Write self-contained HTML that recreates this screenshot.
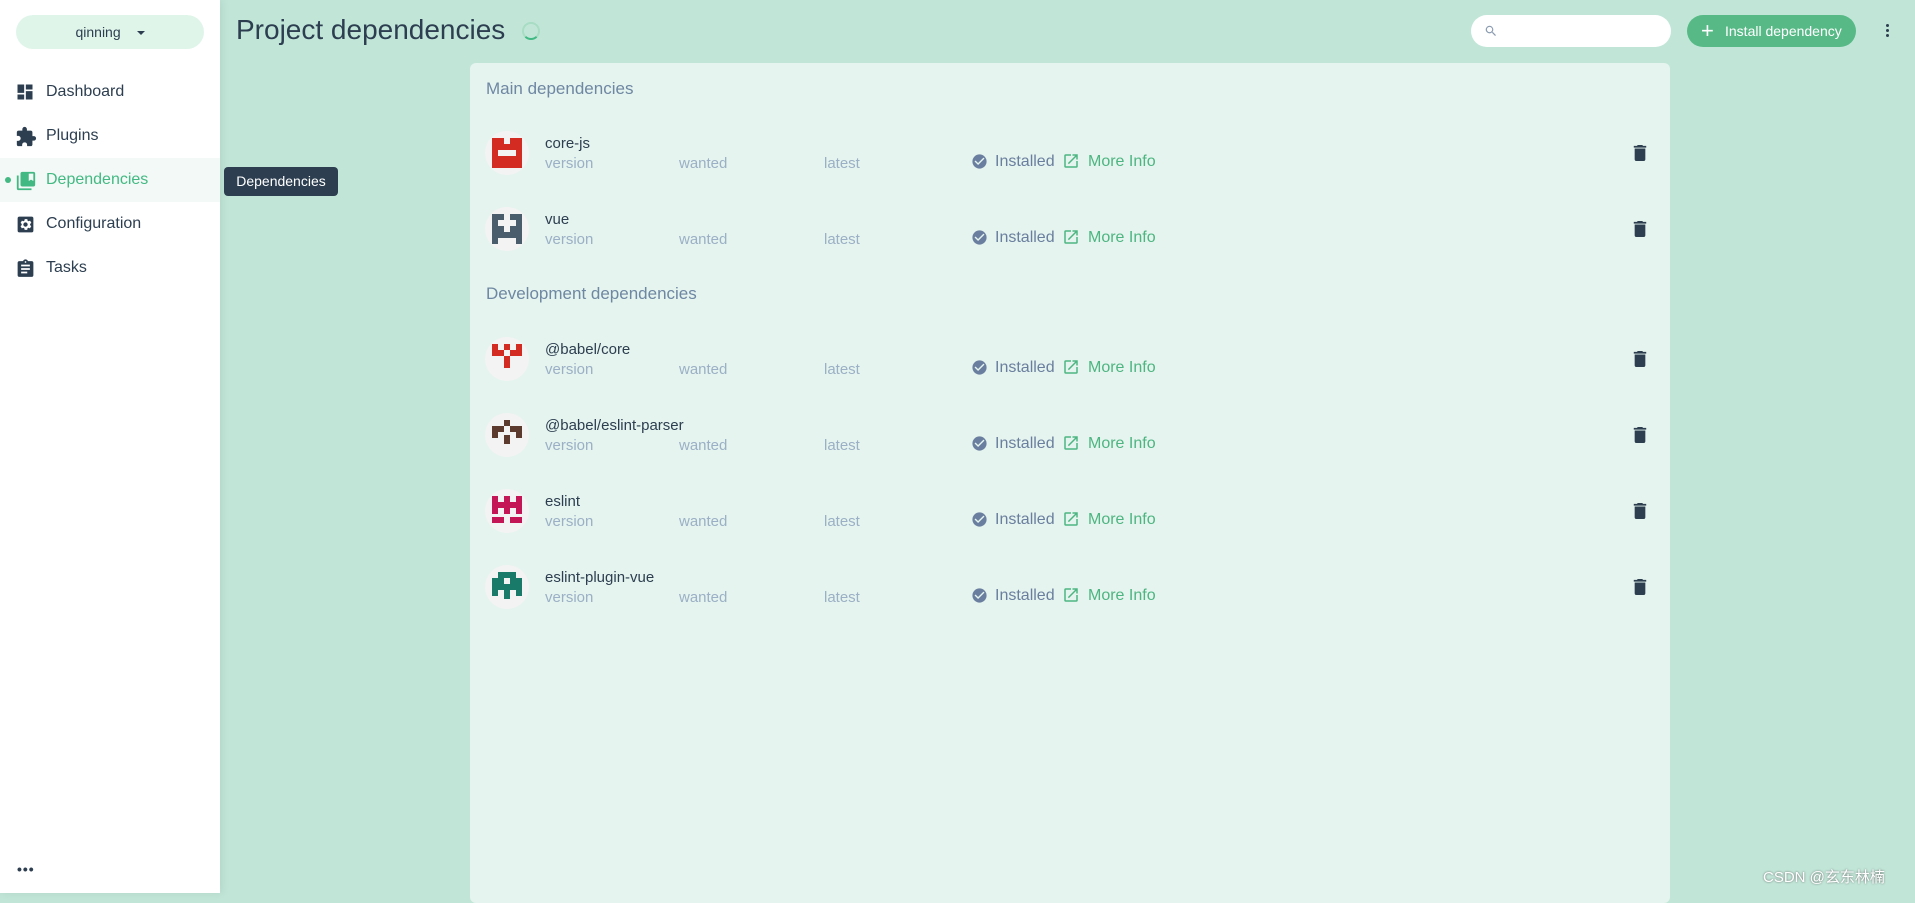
<!DOCTYPE html>
<html><head><meta charset="utf-8"><style>
*{margin:0;padding:0;box-sizing:border-box}
body{width:1915px;height:893px;overflow:hidden;background:#c1e6d8;font-family:"Liberation Sans",sans-serif;position:relative;color:#2c3e50}
.side{position:absolute;left:0;top:0;width:220px;height:893px;background:#fff;box-shadow:2px 0 8px rgba(0,0,0,.08)}
.pill{position:absolute;left:16px;top:15px;width:188px;height:34px;border-radius:17px;background:#e0f5ea;font-size:14px;text-align:center;line-height:34px;color:#2c3e50}
.nav{position:absolute;left:0;width:220px;height:44px;font-size:16px;line-height:44px;color:#2c3e50}
.nav svg{position:absolute;left:15px;top:12px}
.nav span{position:absolute;left:46px}
.nav.act{background:#f3f9f6;color:#42b983}
.dot{position:absolute;left:5px;top:19px;width:6px;height:6px;border-radius:3px;background:#42b983}
.tip{position:absolute;left:224px;top:167px;width:114px;height:29px;background:#2c3e50;border-radius:4px;color:#fff;font-size:14px;line-height:29px;text-align:center}
h1{position:absolute;left:236px;top:14px;font-size:28px;font-weight:normal;color:#2c3e50}
.spin{position:absolute;left:522px;top:22px;width:18px;height:18px;border-radius:50%;border:2px solid #a8dcc3;border-bottom-color:#42b983}
.search{position:absolute;left:1471px;top:15px;width:200px;height:32px;border-radius:16px;background:#fff}
.btn{position:absolute;left:1687px;top:15px;width:169px;height:32px;border-radius:16px;background:#57ba86;color:#fff;font-size:14px;line-height:32px}
.card{position:absolute;left:470px;top:63px;width:1200px;height:840px;background:#e5f4ee;border-radius:6px}
.sec{position:absolute;left:16px;font-size:17px;color:#6e87a3}
.row{position:absolute;left:0;width:1200px;height:60px}
.av{position:absolute;left:15px;top:-12px;width:44px;height:44px;border-radius:50%;background:#f3f3f3}
.av svg{position:absolute;left:7px;top:7px}
.nm{position:absolute;left:75px;top:-8px;font-size:15px;color:#2c3e50}
.g{position:absolute;top:12px;font-size:15px;color:#9bb0c6}
.ins{position:absolute;left:525px;top:10px;font-size:16px;color:#6a7f9f}
.mi{position:absolute;left:618px;top:10px;font-size:16px;color:#4db581}
.tr{position:absolute;left:1163px;top:2px}
</style></head><body>
<div class="side">
<div class="pill">qinning <span style="display:inline-block;margin-left:12px;border-left:4px solid transparent;border-right:4px solid transparent;border-top:4px solid #2c3e50;vertical-align:middle"></span></div>
<div class="nav" style="top:70px"><svg width="20" height="20" viewBox="0 0 24 24"><path fill="#2c3e50" d="M3 13h8V3H3zm0 8h8v-6H3zm10 0h8V11h-8zm0-18v6h8V3z"/></svg><span>Dashboard</span></div>
<div class="nav" style="top:114px"><svg width="22" height="22" viewBox="0 0 24 24"><path fill="#2c3e50" d="M20.5 11H19V7a2 2 0 0 0-2-2h-4V3.5a2.5 2.5 0 0 0-5 0V5H4a2 2 0 0 0-2 2v3.8h1.5a2.7 2.7 0 0 1 0 5.4H2V20a2 2 0 0 0 2 2h3.8v-1.5a2.7 2.7 0 0 1 5.4 0V22H17a2 2 0 0 0 2-2v-4h1.5a2.5 2.5 0 0 0 0-5z"/></svg><span>Plugins</span></div>
<div class="nav act" style="top:158px"><div class="dot"></div><svg width="22" height="22" viewBox="0 0 24 24"><path fill="#42b983" d="M4 6H2v14a2 2 0 0 0 2 2h14v-2H4zm16-4H8a2 2 0 0 0-2 2v12a2 2 0 0 0 2 2h12a2 2 0 0 0 2-2V4a2 2 0 0 0-2-2zm0 10-2.5-1.5L15 12V4h5z"/></svg><span>Dependencies</span></div>
<div class="nav" style="top:202px"><svg width="21" height="21" viewBox="0 0 24 24"><path fill="#2c3e50" d="M19 3H5a2 2 0 0 0-2 2v14a2 2 0 0 0 2 2h14a2 2 0 0 0 2-2V5a2 2 0 0 0-2-2zm-1.8 9.7 1.4 1.1-1.5 2.6-1.7-.7-1.2.7-.2 1.8h-3l-.3-1.8-1.2-.7-1.7.7-1.5-2.6 1.4-1.1v-1.4L6.4 10.2l1.5-2.6 1.7.7 1.2-.7.3-1.8h3l.2 1.8 1.2.7 1.7-.7 1.5 2.6-1.4 1.1zM12 9.5a2.5 2.5 0 1 0 0 5 2.5 2.5 0 0 0 0-5z"/></svg><span>Configuration</span></div>
<div class="nav" style="top:246px"><svg width="21" height="22" viewBox="0 0 24 24"><path fill="#2c3e50" d="M19 3h-4.2A3 3 0 0 0 12 1a3 3 0 0 0-2.8 2H5a2 2 0 0 0-2 2v14a2 2 0 0 0 2 2h14a2 2 0 0 0 2-2V5a2 2 0 0 0-2-2zm-7 0a1 1 0 1 1 0 2 1 1 0 0 1 0-2zm2 14H7v-2h7zm3-4H7v-2h10zm0-4H7V7h10z"/></svg><span>Tasks</span></div>
<div style="position:absolute;left:17px;top:866px;font-size:14px;font-weight:bold;letter-spacing:1px;line-height:6px">•••</div>
</div>
<div class="tip">Dependencies</div>
<h1>Project dependencies</h1><div class="spin"></div>
<div class="search"><svg style="position:absolute;left:13px;top:9px" width="14" height="14" viewBox="0 0 24 24"><path fill="#8a9bb0" d="M15.5 14h-.8l-.3-.3A6.5 6.5 0 1 0 9.5 16a6.5 6.5 0 0 0 4.2-1.6l.3.3v.8l5 5 1.5-1.5zm-6 0a4.5 4.5 0 1 1 0-9 4.5 4.5 0 0 1 0 9z"/></svg></div>
<div class="btn"><span style="position:absolute;left:14px;top:0;font-size:22px;font-weight:300">+</span><span style="position:absolute;left:38px">Install dependency</span></div>
<div style="position:absolute;left:1886px;top:24px;width:4px"><div style="width:3px;height:3px;background:#2c3e50;border-radius:2px;margin-bottom:2px"></div><div style="width:3px;height:3px;background:#2c3e50;border-radius:2px;margin-bottom:2px"></div><div style="width:3px;height:3px;background:#2c3e50;border-radius:2px"></div></div>
<div class="card">
<div class="sec" style="top:16px">Main dependencies</div>
<div class="row" style="top:80px"><div class="av"><svg width="30" height="30" viewBox="0 0 5 5"><path fill="#d32a22" d="M0 0h2v1h-2zM3 0h2v1h-2zM0 1h5v1h-5zM0 2h1v1h-1zM4 2h1v1h-1zM0 3h5v2h-5z"/></svg></div><div class="nm">core-js</div><div class="g" style="left:75px">version</div><div class="g" style="left:209px">wanted</div><div class="g" style="left:354px">latest</div></div>
<div class="row" style="top:156px"><div class="av"><svg width="30" height="30" viewBox="0 0 5 5"><path fill="#4a5d6c" d="M0 0h2v1h-2zM3 0h2v1h-2zM0 1h1v1h-1zM4 1h1v1h-1zM0 2h2v1h-2zM3 2h2v1h-2zM0 3h5v1h-5zM0 4h1v1h-1zM4 4h1v1h-1z"/></svg></div><div class="nm">vue</div><div class="g" style="left:75px">version</div><div class="g" style="left:209px">wanted</div><div class="g" style="left:354px">latest</div></div>
<div class="sec" style="top:221px">Development dependencies</div>
<div class="row" style="top:286px"><div class="av"><svg width="30" height="30" viewBox="0 0 5 5"><path fill="#d32a22" d="M0 0h1v1h-1zM2 0h1v1h-1zM4 0h1v1h-1zM0 1h2v1h-2zM3 1h2v1h-2zM2 2h1v2h-1z"/></svg></div><div class="nm">@babel/core</div><div class="g" style="left:75px">version</div><div class="g" style="left:209px">wanted</div><div class="g" style="left:354px">latest</div></div>
<div class="row" style="top:362px"><div class="av"><svg width="30" height="30" viewBox="0 0 5 5"><path fill="#5d3a2e" d="M2 0h1v1h-1zM0 1h2v1h-2zM3 1h2v1h-2zM0 2h1v1h-1zM4 2h1v1h-1zM2 2.5h1v1.5h-1z"/></svg></div><div class="nm">@babel/eslint-parser</div><div class="g" style="left:75px">version</div><div class="g" style="left:209px">wanted</div><div class="g" style="left:354px">latest</div></div>
<div class="row" style="top:438px"><div class="av"><svg width="30" height="30" viewBox="0 0 5 5"><path fill="#c41557" d="M0 0h1v1h-1zM2 0h1v1h-1zM4 0h1v1h-1zM1 1h1v1h-1zM3 1h1v1h-1zM0 1h1v1h-1zM4 1h1v1h-1zM2 1h1v2h-1zM0 2h1v1h-1zM4 2h1v1h-1zM0 3.5h2v1h-2zM3 3.5h2v1h-2z"/></svg></div><div class="nm">eslint</div><div class="g" style="left:75px">version</div><div class="g" style="left:209px">wanted</div><div class="g" style="left:354px">latest</div></div>
<div class="row" style="top:514px"><div class="av"><svg width="30" height="30" viewBox="0 0 5 5"><path fill="#1a7a6a" d="M1 0h3v1h-3zM0 1h2v1h-2zM3 1h2v1h-2zM0 2h5v1h-5zM0 3h1v1h-1zM4 3h1v1h-1zM2 3h1v1.5h-1z"/></svg></div><div class="nm">eslint-plugin-vue</div><div class="g" style="left:75px">version</div><div class="g" style="left:209px">wanted</div><div class="g" style="left:354px">latest</div></div>
</div>
<style>.st{position:absolute;left:470px;width:1200px;height:40px}</style>
<div class="st" style="top:143px"><svg style="position:absolute;left:501px;top:10px" width="17" height="17" viewBox="0 0 24 24"><path fill="#6a7f9f" d="M12 2a10 10 0 1 0 0 20 10 10 0 0 0 0-20zm-2 15-5-5 1.4-1.4 3.6 3.6 7.6-7.6L19 8z"/></svg><div class="ins">Installed</div><svg style="position:absolute;left:592px;top:9px" width="18" height="18" viewBox="0 0 24 24"><path fill="#4db581" d="M19 19H5V5h7V3H5a2 2 0 0 0-2 2v14a2 2 0 0 0 2 2h14a2 2 0 0 0 2-2v-7h-2zM14 3v2h3.6l-9.8 9.8 1.4 1.4L19 6.4V10h2V3z"/></svg><div class="mi">More Info</div><svg class="tr" width="14" height="16" viewBox="5 3 14 18"><path fill="#2c3e50" d="M6 19a2 2 0 0 0 2 2h8a2 2 0 0 0 2-2V7H6zM19 4h-3.5l-1-1h-5l-1 1H5v2h14z"/></svg></div>
<div class="st" style="top:219px"><svg style="position:absolute;left:501px;top:10px" width="17" height="17" viewBox="0 0 24 24"><path fill="#6a7f9f" d="M12 2a10 10 0 1 0 0 20 10 10 0 0 0 0-20zm-2 15-5-5 1.4-1.4 3.6 3.6 7.6-7.6L19 8z"/></svg><div class="ins">Installed</div><svg style="position:absolute;left:592px;top:9px" width="18" height="18" viewBox="0 0 24 24"><path fill="#4db581" d="M19 19H5V5h7V3H5a2 2 0 0 0-2 2v14a2 2 0 0 0 2 2h14a2 2 0 0 0 2-2v-7h-2zM14 3v2h3.6l-9.8 9.8 1.4 1.4L19 6.4V10h2V3z"/></svg><div class="mi">More Info</div><svg class="tr" width="14" height="16" viewBox="5 3 14 18"><path fill="#2c3e50" d="M6 19a2 2 0 0 0 2 2h8a2 2 0 0 0 2-2V7H6zM19 4h-3.5l-1-1h-5l-1 1H5v2h14z"/></svg></div>
<div class="st" style="top:349px"><svg style="position:absolute;left:501px;top:10px" width="17" height="17" viewBox="0 0 24 24"><path fill="#6a7f9f" d="M12 2a10 10 0 1 0 0 20 10 10 0 0 0 0-20zm-2 15-5-5 1.4-1.4 3.6 3.6 7.6-7.6L19 8z"/></svg><div class="ins">Installed</div><svg style="position:absolute;left:592px;top:9px" width="18" height="18" viewBox="0 0 24 24"><path fill="#4db581" d="M19 19H5V5h7V3H5a2 2 0 0 0-2 2v14a2 2 0 0 0 2 2h14a2 2 0 0 0 2-2v-7h-2zM14 3v2h3.6l-9.8 9.8 1.4 1.4L19 6.4V10h2V3z"/></svg><div class="mi">More Info</div><svg class="tr" width="14" height="16" viewBox="5 3 14 18"><path fill="#2c3e50" d="M6 19a2 2 0 0 0 2 2h8a2 2 0 0 0 2-2V7H6zM19 4h-3.5l-1-1h-5l-1 1H5v2h14z"/></svg></div>
<div class="st" style="top:425px"><svg style="position:absolute;left:501px;top:10px" width="17" height="17" viewBox="0 0 24 24"><path fill="#6a7f9f" d="M12 2a10 10 0 1 0 0 20 10 10 0 0 0 0-20zm-2 15-5-5 1.4-1.4 3.6 3.6 7.6-7.6L19 8z"/></svg><div class="ins">Installed</div><svg style="position:absolute;left:592px;top:9px" width="18" height="18" viewBox="0 0 24 24"><path fill="#4db581" d="M19 19H5V5h7V3H5a2 2 0 0 0-2 2v14a2 2 0 0 0 2 2h14a2 2 0 0 0 2-2v-7h-2zM14 3v2h3.6l-9.8 9.8 1.4 1.4L19 6.4V10h2V3z"/></svg><div class="mi">More Info</div><svg class="tr" width="14" height="16" viewBox="5 3 14 18"><path fill="#2c3e50" d="M6 19a2 2 0 0 0 2 2h8a2 2 0 0 0 2-2V7H6zM19 4h-3.5l-1-1h-5l-1 1H5v2h14z"/></svg></div>
<div class="st" style="top:501px"><svg style="position:absolute;left:501px;top:10px" width="17" height="17" viewBox="0 0 24 24"><path fill="#6a7f9f" d="M12 2a10 10 0 1 0 0 20 10 10 0 0 0 0-20zm-2 15-5-5 1.4-1.4 3.6 3.6 7.6-7.6L19 8z"/></svg><div class="ins">Installed</div><svg style="position:absolute;left:592px;top:9px" width="18" height="18" viewBox="0 0 24 24"><path fill="#4db581" d="M19 19H5V5h7V3H5a2 2 0 0 0-2 2v14a2 2 0 0 0 2 2h14a2 2 0 0 0 2-2v-7h-2zM14 3v2h3.6l-9.8 9.8 1.4 1.4L19 6.4V10h2V3z"/></svg><div class="mi">More Info</div><svg class="tr" width="14" height="16" viewBox="5 3 14 18"><path fill="#2c3e50" d="M6 19a2 2 0 0 0 2 2h8a2 2 0 0 0 2-2V7H6zM19 4h-3.5l-1-1h-5l-1 1H5v2h14z"/></svg></div>
<div class="st" style="top:577px"><svg style="position:absolute;left:501px;top:10px" width="17" height="17" viewBox="0 0 24 24"><path fill="#6a7f9f" d="M12 2a10 10 0 1 0 0 20 10 10 0 0 0 0-20zm-2 15-5-5 1.4-1.4 3.6 3.6 7.6-7.6L19 8z"/></svg><div class="ins">Installed</div><svg style="position:absolute;left:592px;top:9px" width="18" height="18" viewBox="0 0 24 24"><path fill="#4db581" d="M19 19H5V5h7V3H5a2 2 0 0 0-2 2v14a2 2 0 0 0 2 2h14a2 2 0 0 0 2-2v-7h-2zM14 3v2h3.6l-9.8 9.8 1.4 1.4L19 6.4V10h2V3z"/></svg><div class="mi">More Info</div><svg class="tr" width="14" height="16" viewBox="5 3 14 18"><path fill="#2c3e50" d="M6 19a2 2 0 0 0 2 2h8a2 2 0 0 0 2-2V7H6zM19 4h-3.5l-1-1h-5l-1 1H5v2h14z"/></svg></div>
<div style="position:absolute;left:1763px;top:866px;font-size:15px;color:#fff;text-shadow:0 0 2px #666;font-family:'Liberation Sans','Noto Sans CJK SC',sans-serif">CSDN @玄东林楠</div>
</body></html>
